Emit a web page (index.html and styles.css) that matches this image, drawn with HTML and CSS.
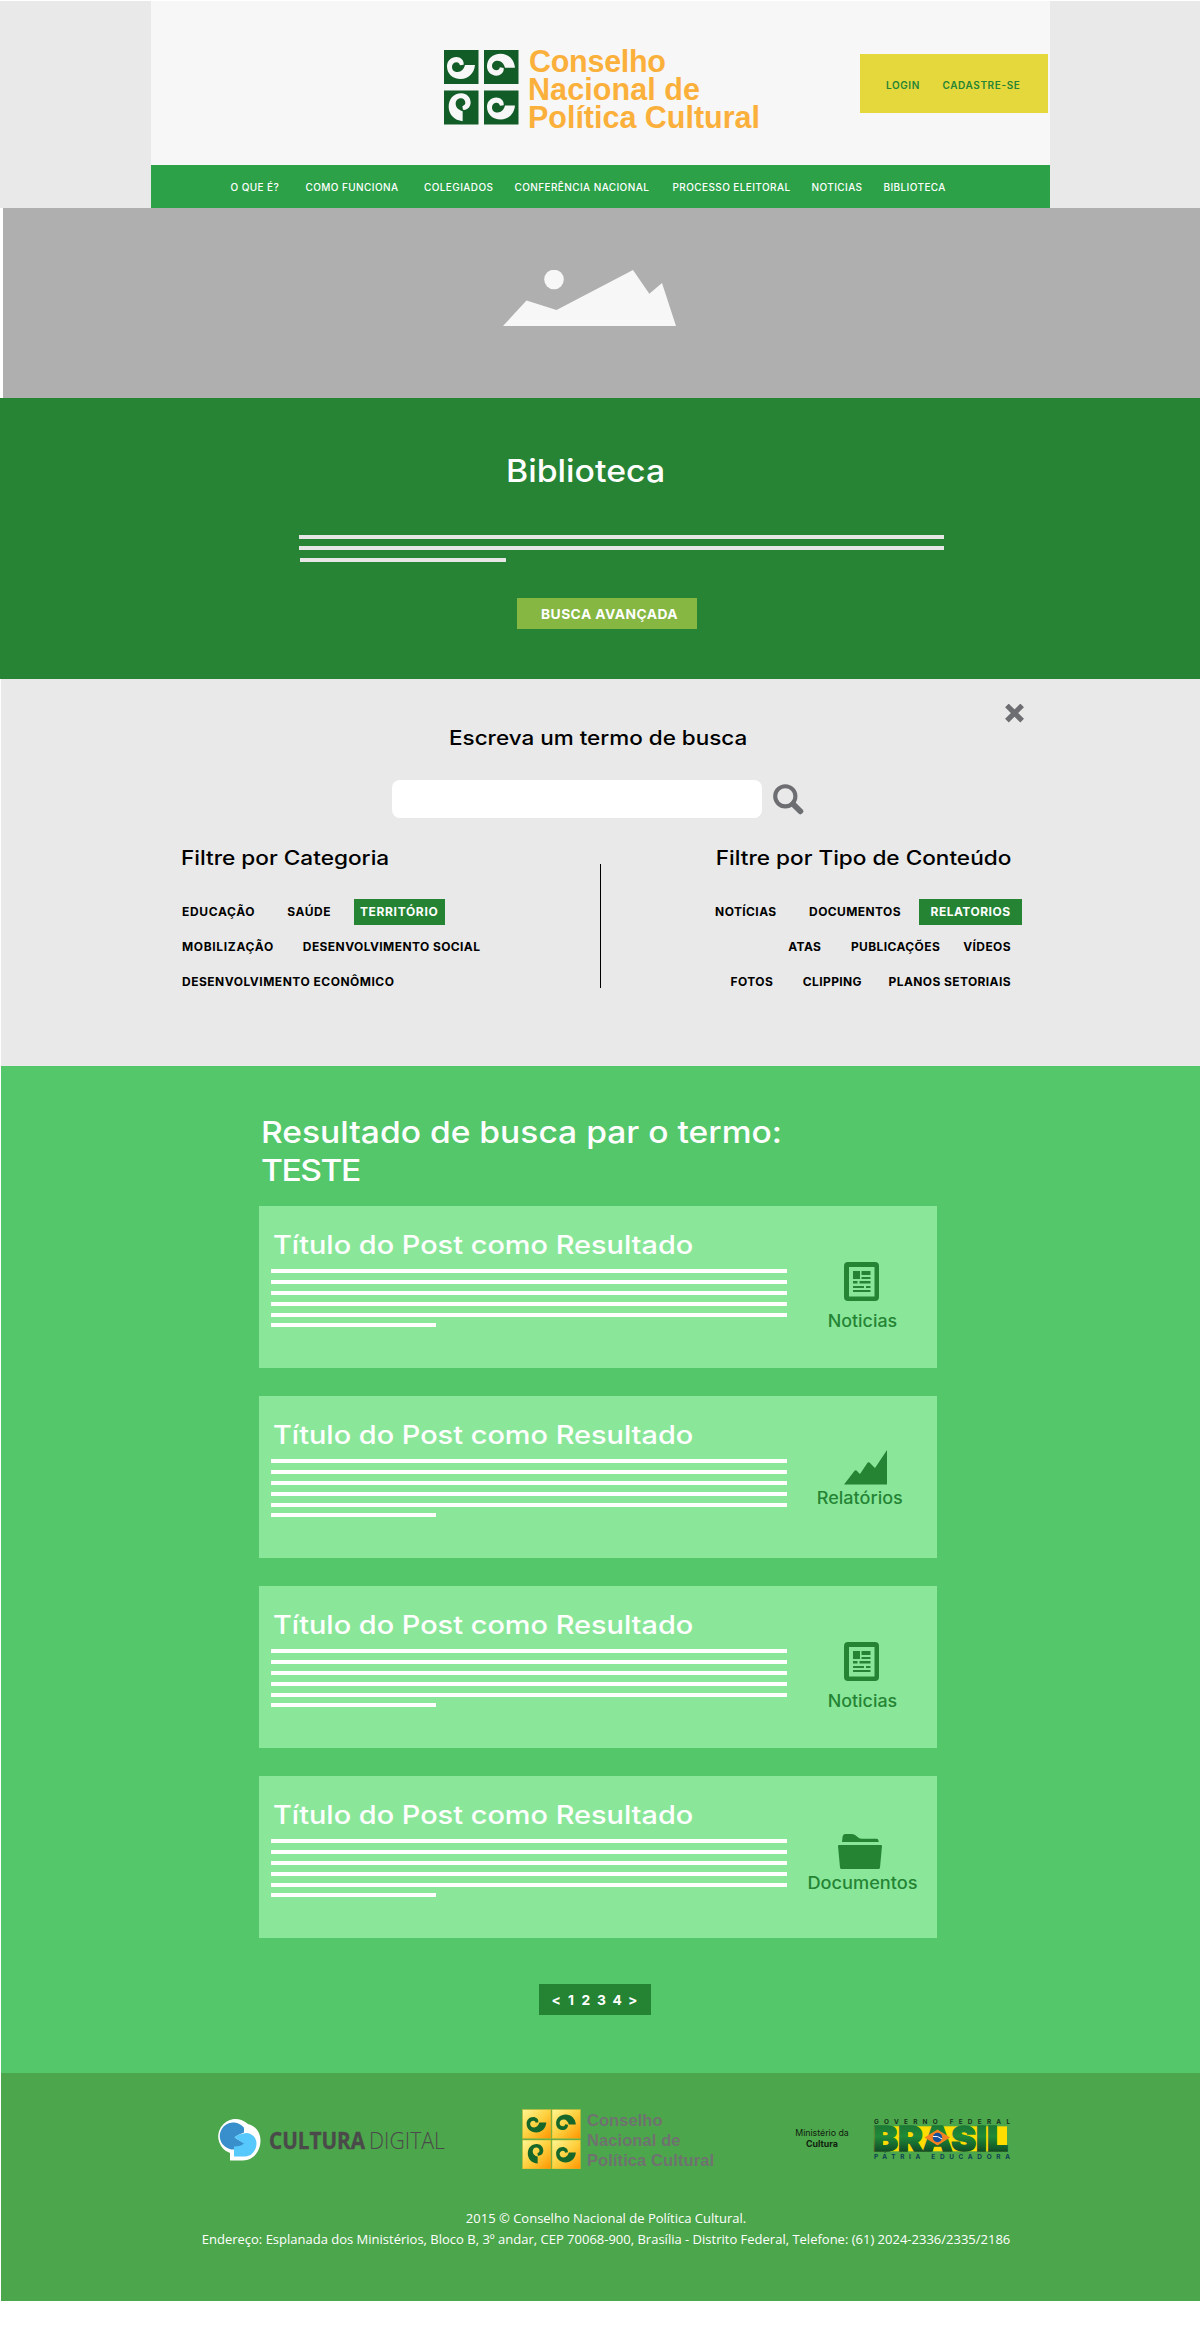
FILE: index.html
```html
<!DOCTYPE html>
<html lang="pt-BR">
<head>
<meta charset="utf-8">
<title>Biblioteca - Conselho Nacional de Política Cultural</title>
<link rel="stylesheet" href="styles.css">
</head>
<body>
<svg class="defs" width="0" height="0" aria-hidden="true">
  <defs>
    <path id="curl" d="M93 45C91 70 73 87 50 87C26 87 9 72 9 49C9 33 21 21 37 21C50 21 61 31 59 44L48 46C46 40 43 37 38 37C30 37 24 43 24 50C24 60 31 66 41 66C52 66 60 57 63 45Z"/>
    <g id="icon-news">
      <path fill-rule="evenodd" d="M4 0H31Q35 0 35 4V35Q35 39 31 39H4Q0 39 0 35V4Q0 0 4 0ZM5 5V34.5H30.500V5Z"/>
      <path d="M9 9h7v8H9zM17.500 9H26.500v4H17.500zM17.500 15H26.500v2H17.500zM9 19h4.500v2.500H9zM15.500 19h11v2.500h-11zM9 24h11v2H9zM22 24h4.500v2H22zM9 28h17.500v2H9z"/>
    </g>
  </defs>
</svg>

<header class="header">
  <div class="header__inner">
    <svg class="brand" width="320" height="90" viewBox="0 0 320 90">
      <g fill="#125c27"><path d="M0 5h34.500v34H0zM40 5h34.500v34H40zM0 45.500h34.500v34H0zM40 45.500h34.500v34H40z"/></g>
      <g fill="#f7f7f7">
        <use href="#curl" transform="translate(0 5) scale(.333)"/>
        <use href="#curl" transform="translate(40 5) scale(.333) translate(0 98) scale(1 -1)"/>
        <use href="#curl" transform="translate(0 45.500) scale(.333) matrix(0 1 -1 0 101 -1)"/>
        <use href="#curl" transform="translate(40 45.500) scale(.333)"/>
      </g>
      <g class="brand__name">
        <text x="85" y="27.300" textLength="137">Conselho</text>
        <text x="84" y="55" textLength="172">Nacional de</text>
        <text x="84" y="82.700" textLength="232">Política Cultural</text>
      </g>
    </svg>
    <div class="account"><a>LOGIN</a><a>CADASTRE-SE</a></div>
  </div>
  <nav class="nav">
    <a>O QUE É?</a><a>COMO FUNCIONA</a><a>COLEGIADOS</a><a>CONFERÊNCIA NACIONAL</a><a>PROCESSO ELEITORAL</a><a>NOTICIAS</a><a>BIBLIOTECA</a>
  </nav>
</header>

<div class="banner">
  <svg width="173" height="56" viewBox="0 0 173 56" fill="#f7f7f7"><path d="M0 56L23.500 30.500L53.500 40L130 0L146.300 23.700L159 13L173 56Z"/><circle cx="51" cy="9.500" r="9.800"/></svg>
</div>

<section class="hero">
  <h1>Biblioteca</h1>
  <div class="hero__lines"><i></i><i></i><i></i></div>
  <a class="hero__button">BUSCA AVANÇADA</a>
</section>

<section class="search">
  <svg class="search__close" width="19" height="19" viewBox="0 0 19 19"><path d="M3.200 3.200L15.800 15.800M15.800 3.200L3.200 15.800" stroke="#6d6e71" stroke-width="5.600" stroke-linecap="square" transform="translate(.8 .3) scale(.92)"/></svg>
  <h2>Escreva um termo de busca</h2>
  <div class="search__row">
    <input class="search__input" type="text" aria-label="Termo de busca">
    <svg width="31" height="31" viewBox="0 0 31 31" fill="none" stroke="#6d6e71"><circle cx="12.300" cy="12.300" r="10.100" stroke-width="4.100"/><path d="M20 20L27.300 27.300" stroke-width="5.800" stroke-linecap="round"/></svg>
  </div>
  <div class="filters">
    <div class="filter filter--category">
      <h3>Filtre por Categoria</h3>
      <ul class="tags tags--a"><li class="wide">EDUCAÇÃO</li><li>SAÚDE</li><li class="on wide">TERRITÓRIO</li></ul>
      <ul class="tags tags--b"><li class="wide">MOBILIZAÇÃO</li><li class="tight">DESENVOLVIMENTO SOCIAL</li></ul>
      <ul class="tags"><li>DESENVOLVIMENTO ECONÔMICO</li></ul>
    </div>
    <div class="filters__divider"></div>
    <div class="filter filter--type">
      <h3>Filtre por Tipo de Conteúdo</h3>
      <ul class="tags tags--c"><li>NOTÍCIAS</li><li>DOCUMENTOS</li><li class="on">RELATORIOS</li></ul>
      <ul class="tags tags--d"><li>ATAS</li><li>PUBLICAÇÕES</li><li>VÍDEOS</li></ul>
      <ul class="tags tags--e"><li>FOTOS</li><li>CLIPPING</li><li>PLANOS SETORIAIS</li></ul>
    </div>
  </div>
</section>

<section class="results">
  <h2>Resultado de busca par o termo:<br><span>TESTE</span></h2>
  <article class="card">
    <div class="card__body"><h3>Título do Post como Resultado</h3><div class="card__lines"><i></i><i></i><i></i><i></i><i></i><i></i></div></div>
    <div class="kind kind--news"><svg width="35" height="39" viewBox="0 0 35 39"><use href="#icon-news"/></svg><span>Noticias</span></div>
  </article>
  <article class="card">
    <div class="card__body"><h3>Título do Post como Resultado</h3><div class="card__lines"><i></i><i></i><i></i><i></i><i></i><i></i></div></div>
    <div class="kind kind--reports"><svg width="43" height="35" viewBox="0 0 43 35"><path d="M0 34.500L10 21.500Q11.500 19.500 13 21L16 24L23 13.500Q24.500 11.500 26 13L31 18L43 0V34.500Z"/></svg><span>Relatórios</span></div>
  </article>
  <article class="card">
    <div class="card__body"><h3>Título do Post como Resultado</h3><div class="card__lines"><i></i><i></i><i></i><i></i><i></i><i></i></div></div>
    <div class="kind kind--news"><svg width="35" height="39" viewBox="0 0 35 39"><use href="#icon-news"/></svg><span>Noticias</span></div>
  </article>
  <article class="card">
    <div class="card__body"><h3>Título do Post como Resultado</h3><div class="card__lines"><i></i><i></i><i></i><i></i><i></i><i></i></div></div>
    <div class="kind kind--docs"><svg width="44" height="35" viewBox="0 0 44 35"><path d="M4 8L4.600 2.500Q5 0 7 0H14Q17 0 19 2.500Q21 4.700 24 4.700H38.500Q40 4.700 40.300 6L40.800 8ZM1 11H43Q44 11 44 12L42 33.500Q41.800 35 40.500 35H3.500Q2.200 35 2 33.500L0 12Q0 11 1 11Z"/></svg><span>Documentos</span></div>
  </article>
  <div class="pager"><a>&lt;</a><a>1</a><a>2</a><a>3</a><a>4</a><a>&gt;</a></div>
</section>

<footer class="footer">
  <div class="partners">
    <svg width="236" height="60" viewBox="0 0 236 60">
      <path fill="#fff" d="M15 52V44.500A17.500 17.500 0 1 1 33 15.500C40 17 45.500 23.500 45.500 32C45.500 43 38 52 28 52Z" transform="translate(-1 -.500)"/>
      <path fill="#388fcb" d="M28 18.800A13.500 13.500 0 1 0 28.500 34.500L18.500 28.500Q20 26.500 28 23.500Z"/>
      <path fill="#56c8fb" d="M27.500 24.500Q32.500 23 36 26C41.500 29.500 41.500 36.500 38.500 41.500C36 46 32.500 47.500 27.500 47.500H18V37.500Q25 37.500 28 34.500L18.500 28.500Q21 25.500 27.500 24.500Z"/>
      <g fill="#4a4a4a" class="digital">
        <text x="53" y="40" font-weight="700" stroke="#4a4a4a" stroke-width=".4" textLength="96" lengthAdjust="spacingAndGlyphs">CULTURA</text>
        <text x="153" y="40" font-weight="300" textLength="76" lengthAdjust="spacingAndGlyphs">DIGITAL</text>
      </g>
    </svg>
    <svg class="council" width="196" height="60" viewBox="0 0 196 60">
      <defs><linearGradient id="gold" x1="0" y1="0" x2="1" y2="1"><stop offset="0" stop-color="#fff795"/><stop offset=".5" stop-color="#ffd03e"/><stop offset="1" stop-color="#ff9400"/></linearGradient></defs>
      <g fill="url(#gold)" stroke="#b9b935" stroke-width=".6">
        <rect x=".5" y=".5" width="28.500" height="29"/><rect x="30" y=".5" width="28.500" height="29"/><rect x=".5" y="31" width="28.500" height="29"/><rect x="30" y="31" width="28.500" height="29"/>
      </g>
      <g fill="#17672b">
        <use href="#curl" transform="translate(2.500 3) scale(.235)"/>
        <use href="#curl" transform="translate(32 3) scale(.235) translate(0 98) scale(1 -1)"/>
        <use href="#curl" transform="translate(2.500 33) scale(.235) matrix(0 1 -1 0 101 -1)"/>
        <use href="#curl" transform="translate(32 33) scale(.235)"/>
      </g>
      <g class="council__name">
        <text x="65" y="16.700" textLength="75.500">Conselho</text>
        <text x="65" y="36.700" textLength="93.500">Nacional de</text>
        <text x="65" y="56.700" textLength="127">Política Cultural</text>
      </g>
    </svg>
    <p class="ministry">Ministério da<br><b>Cultura</b></p>
    <svg class="brasil" width="142" height="60" viewBox="0 0 142 60">
      <defs>
        <linearGradient id="leaf" gradientUnits="userSpaceOnUse" x1="0" y1="17" x2="0" y2="43"><stop offset="0" stop-color="#1c7a35"/><stop offset=".4" stop-color="#1f8a38"/><stop offset="1" stop-color="#0f4a26"/></linearGradient>
      </defs>
      <text x="1" y="14.700" class="brasil__small" fill="#16331c" textLength="136">GOVERNO FEDERAL</text>
      <rect x="1" y="17.300" width="133" height="25" fill="#ffdd00"/>
      <text x="0" y="42" class="brasil__big" fill="url(#leaf)" stroke="url(#leaf)" textLength="135" lengthAdjust="spacingAndGlyphs">BRASIL</text>
      <path d="M51.500 28.500L64.500 20.500L77 28.500L64.500 36.500Z" fill="#f58220"/>
      <circle cx="64.500" cy="28.500" r="4.700" fill="#16509c"/><path d="M60 27.500Q65 26.500 69 30" stroke="#fff" stroke-width="1" fill="none"/>
      <text x="1" y="50.300" class="brasil__small" fill="#0e4052" textLength="136">PÁTRIA EDUCADORA</text>
    </svg>
  </div>
  <p class="address">2015 © Conselho Nacional de Política Cultural.<br>Endereço: Esplanada dos Ministérios, Bloco B, 3º andar, CEP 70068-900, Brasília - Distrito Federal, Telefone: (61) 2024-2336/2335/2186</p>
</footer>
</body>
</html>
```
FILE: styles.css
```css
* { box-sizing: border-box; }
body { margin: 0; background: #fff; font-family: Inter, "Liberation Sans", sans-serif; }
h1, h2, h3, p, ul { margin: 0; padding: 0; font-weight: 500; }
/* Headings are set slightly extended */
h1, h2, h3 { width: max-content; transform-origin: 0 0; white-space: nowrap; }
ul { list-style: none; }
svg { display: block; flex: none; }
i { display: block; height: 4px; }
.defs { position: absolute; }

.header { height: 208px; padding: 1px 150px 0 151px; background: linear-gradient(#fff 1px, #e9e9e9 1px); }
.header__inner { height: 164px; display: flex; justify-content: space-between; padding: 44px 2px 0 293px; background: #f7f7f7; }
.brand__name { font: 700 30.500px "Liberation Sans", sans-serif; fill: #fbb03b; }
.account { width: 188px; height: 59px; margin-top: 9px; padding: 3px 0 0 26px; display: grid; grid-template-columns: 56.500px 1fr; align-items: center; background: #e5d83d; color: #248434; font-size: 10px; font-weight: 600; letter-spacing: .6px; }
.nav { height: 43px; padding-left: 79.500px; display: grid; grid-template-columns: 75px 118.500px 90.500px 158px 139px 72px 1fr; align-items: center; background: #2ca148; color: #fff; font-size: 10px; font-weight: 500; letter-spacing: .4px; white-space: nowrap; }

.banner { height: 190px; margin-left: 3px; padding: 62px 0 0 500px; background: #afafaf; }

.hero { height: 281px; padding-top: 54px; background: #268434; color: #fff; }
.hero h1 { margin-left: 506px; font-size: 31px; line-height: 38px; transform: scaleX(1.09); }
.hero__lines { width: 645px; margin: 45px 0 0 299px; display: grid; gap: 7.300px; }
.hero__lines i { background: #e6e6e6; }
.hero__lines i:last-child { width: 206px; margin-left: 1px; }
.hero__button { display: block; width: 180px; height: 31px; margin: 36px 0 0 517px; padding-left: 24px; background: #85b742; font-size: 13.800px; font-weight: 700; line-height: 32px; letter-spacing: .450px; }

.search { height: 387px; margin-left: 1px; padding-top: 25px; background: #e9e9e9; color: #000; }
.search__close { margin-left: 1003.500px; }
.search h2 { margin: 3px 0 0 448px; font-size: 20.200px; line-height: 24px; transform: scaleX(1.113); }
.search__row { display: flex; gap: 11px; margin: 30px 0 0 391px; }
.search__row svg { margin-top: 4px; }
.search__input { width: 370px; height: 38px; border: 0; border-radius: 8px; background: #fff; }
.filters { display: flex; margin: 28px 0 0 181px; }
.filters h3 { margin-bottom: 24px; font-size: 20.200px; line-height: 24px; transform: scaleX(1.118); }
.filter--category { width: 418px; }
.filter--category h3 { margin-left: -1px; transform: scaleX(1.12); }
.filters__divider { width: 1px; height: 124px; margin-top: 18px; background: #000; }
.filter--type { width: 410px; display: flex; flex-direction: column; align-items: flex-end; }
.filter--type h3 { transform-origin: 100% 0; }
.tags { height: 35px; display: flex; align-items: center; font-size: 12px; line-height: 26px; letter-spacing: .500px; white-space: nowrap; }
.tags li { font-weight: 700; }
.filter--type .tags { letter-spacing: .400px; }
.tags .wide { letter-spacing: .660px; }
.tags .tight { letter-spacing: .410px; }
.tags .on { background: #248434; color: #fff; }
.tags--a { gap: 32px; }
.tags--a .on { width: 91px; margin-left: -9px; padding-left: 6px; }
.tags--b { gap: 29px; }
.tags--c { gap: 32.500px; margin-right: -10.500px; }
.tags--c .on { width: 103px; margin-left: -15px; padding-left: 12px; letter-spacing: .500px; }
.tags--d li + li { margin-left: 29.500px; }
.tags--d li:last-child { margin-left: 23px; }
.tags--e { gap: 29.500px; }
.tags--e li:last-child { margin-left: -3px; }

.results { height: 1007px; margin-left: 1px; padding: 47px 0 0 258px; background: #54c76b; color: #fff; }
.results h2 { margin: 0 0 17px 2px; font-size: 30.500px; line-height: 38px; transform: scaleX(1.101); }
.results h2 span { letter-spacing: -1.300px; }
.card { width: 678px; height: 162px; margin-bottom: 28px; display: flex; background: #8ae79a; }
.card__body { width: 528px; padding: 24px 0 0 12px; }
.card h3 { margin-left: 2px; font-size: 25.800px; line-height: 30px; transform: scaleX(1.12); }
.card__lines { display: grid; gap: 6.900px; margin-top: 9px; }
.card__lines i { background: #fff; }
.card__lines i:last-child { width: 165px; }
.kind { width: 150px; display: flex; flex-direction: column; align-items: center; fill: #248434; color: #248434; font-size: 16.700px; font-weight: 500; line-height: 20px; }
.kind span { transform: scaleX(1.07); }
.kind--news { gap: 10px; padding-top: 56px; }
.kind--news svg { margin-right: 2px; }
.kind--reports { gap: 3px; padding-top: 54px; }
.kind--reports svg { margin-left: 7px; }
.kind--reports span { margin-right: 5px; transform: scaleX(1.08); }
.kind--docs { gap: 4px; padding-top: 58px; }
.kind--docs svg { margin-right: 4px; }
.kind--docs span { margin-left: 2px; transform: scaleX(1.09); }
.pager { width: 112px; height: 31px; margin: 46px 0 0 279.500px; padding-left: 13px; display: grid; grid-template-columns: 16.500px 13.500px 15.500px 15.500px 15.500px 1fr; align-items: center; background: #248434; font-size: 13.800px; font-weight: 700; }

.footer { height: 228px; margin-left: 1px; padding-top: 36px; background: #4ca64b; }
.partners { display: flex; padding-left: 215px; }
.council { margin-left: 70px; }
.digital { font-family: "Open Sans", sans-serif; font-size: 24px; }
.council__name { font: 700 16.500px "Liberation Sans", sans-serif; fill: #6f7370; }
.ministry { width: 80px; margin-left: 64px; padding-top: 18px; text-align: center; color: #10210f; font-size: 8.800px; font-weight: 400; line-height: 11px; }
.brasil { margin-left: 11px; }
.brasil__small { font-size: 6.400px; font-weight: 700; }
.brasil__big { font-size: 34px; font-weight: 900; stroke-width: 1.400px; }
.address { margin-top: 39px; padding-left: 11px; text-align: center; color: #fff; font: 400 13px/21px "Open Sans", sans-serif; white-space: nowrap; }
```
